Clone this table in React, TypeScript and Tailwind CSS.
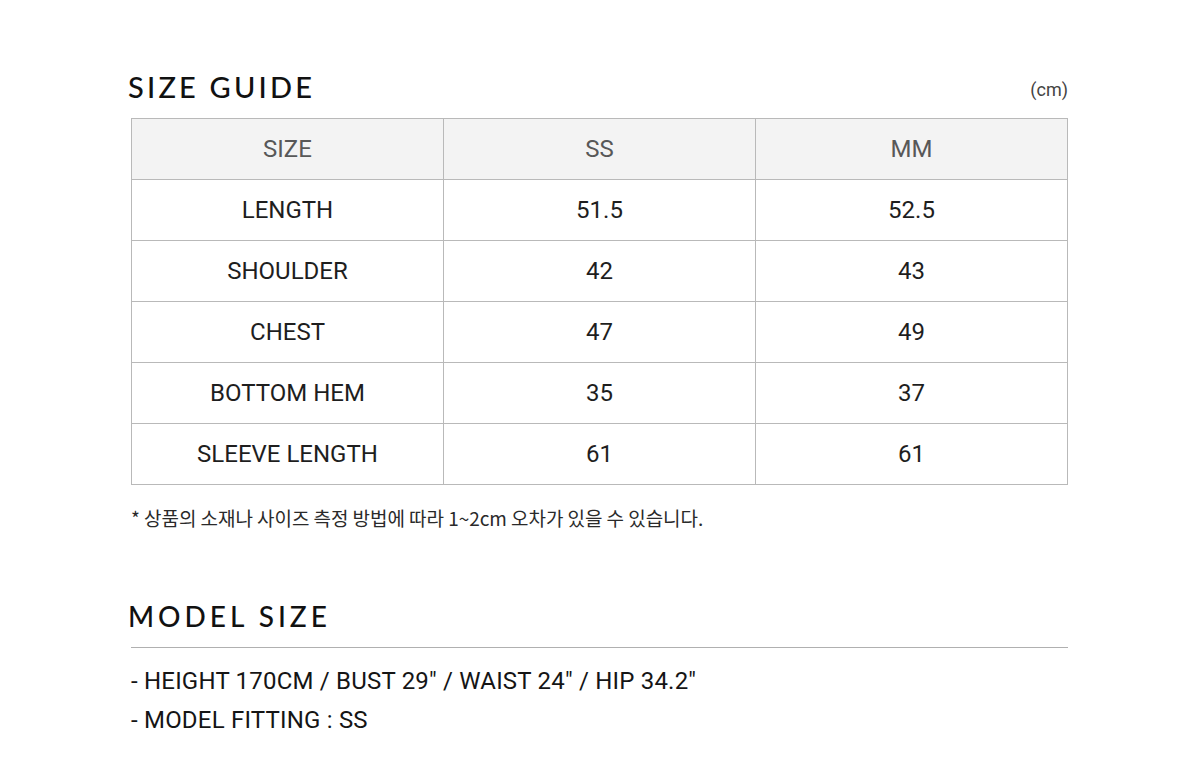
const rows = [
  { label: 'LENGTH', ss: '51.5', mm: '52.5' },
  { label: 'SHOULDER', ss: '42', mm: '43' },
  { label: 'CHEST', ss: '47', mm: '49' },
  { label: 'BOTTOM HEM', ss: '35', mm: '37' },
  { label: 'SLEEVE LENGTH', ss: '61', mm: '61' },
];

const titleFont = "font-['Lato','Open_Sans',sans-serif]";
const bodyFont = "font-['Roboto','Noto_Sans_CJK_KR',sans-serif]";

function Cell({ children, head }: { children: React.ReactNode; head?: boolean }) {
  return (
    <div
      className={`h-[61px] flex items-center justify-center border-r border-b border-[#b9b9b9] text-[24px] leading-none ${
        head ? 'bg-[#f3f3f3] text-[#585858]' : 'text-[#1e1e1e]'
      }`}
    >
      {children}
    </div>
  );
}

export default function App() {
  return (
    <div className={`w-full h-[777px] bg-white pl-[131px] pr-[132px] pt-[72px] ${bodyFont}`}>
      {/* size guide */}
      <div className="flex items-end justify-between">
        <h2 className={`${titleFont} -ml-[3px] text-[29px] leading-[29px] tracking-[3.2px] text-[#111] font-medium`}>
          SIZE GUIDE
        </h2>
        <span className="text-[18px] leading-none text-[#444] mb-[2px]">(cm)</span>
      </div>

      <div className="mt-[17px] grid grid-cols-3 border-t border-l border-[#b9b9b9]">
        <Cell head>SIZE</Cell>
        <Cell head>SS</Cell>
        <Cell head>MM</Cell>
        {rows.map(r => (
          <div key={r.label} className="contents">
            <Cell>{r.label}</Cell>
            <Cell>{r.ss}</Cell>
            <Cell>{r.mm}</Cell>
          </div>
        ))}
      </div>

      <p className="mt-[21px] text-[19px] leading-[24px] text-[#2a2a2a] tracking-[-0.05px] font-['Noto_Sans_CJK_KR',sans-serif]">
        * 상품의 소재나 사이즈 측정 방법에 따라 1~2cm 오차가 있을 수 있습니다.
      </p>

      {/* model size */}
      <h2 className={`${titleFont} mt-[72px] -ml-[3px] text-[28px] leading-[28px] tracking-[4px] text-[#111] font-medium`}>
        MODEL SIZE
      </h2>
      <div className="mt-[17px] border-t border-[#b0b0b0]" />
      <div className="mt-[14px] text-[24px] leading-[39px] text-[#151515] tracking-[0.2px]">
        <p>- HEIGHT 170CM / BUST 29″ / WAIST 24″ / HIP 34.2″</p>
        <p>- MODEL FITTING : SS</p>
      </div>
    </div>
  );
}
